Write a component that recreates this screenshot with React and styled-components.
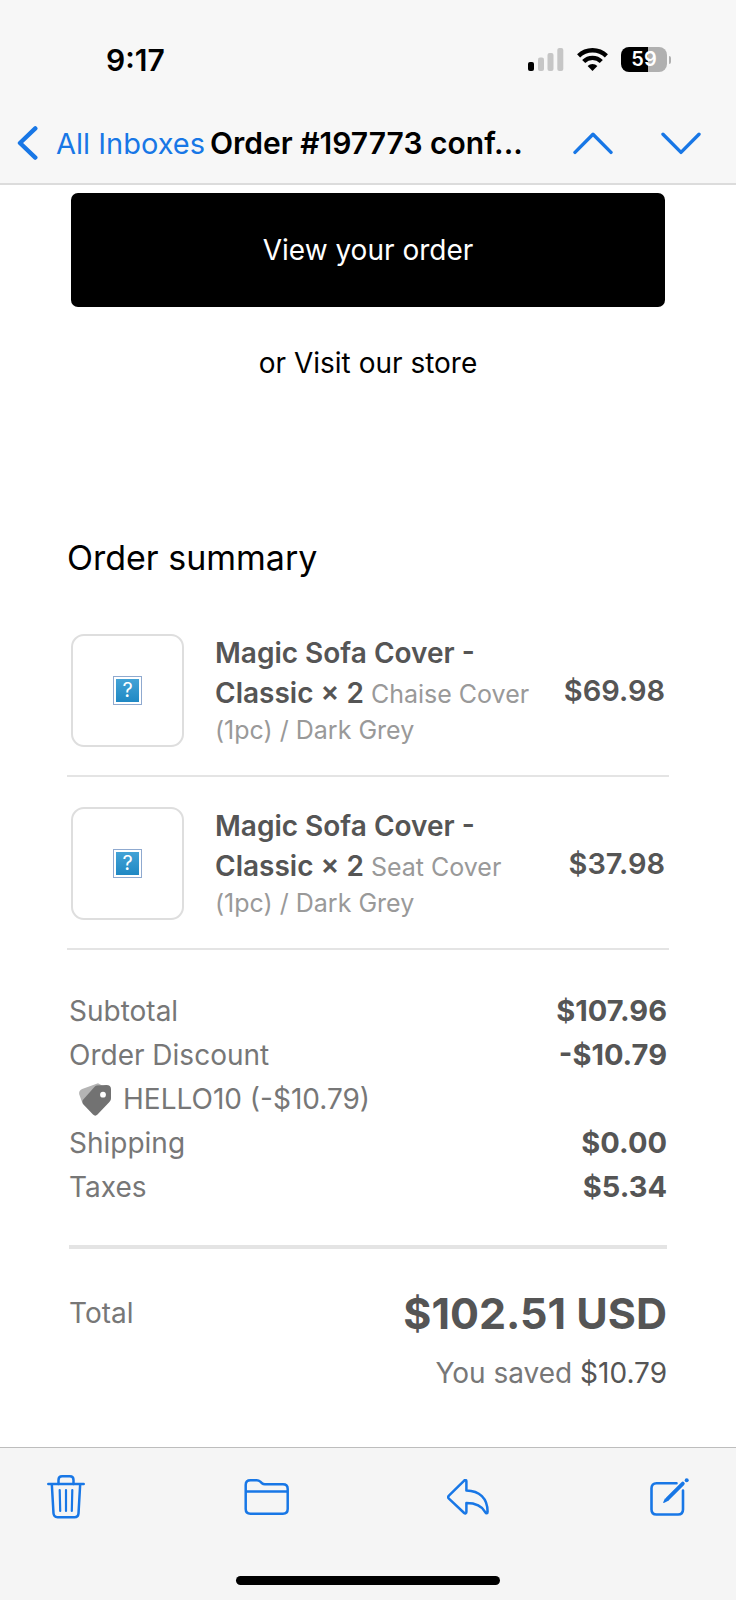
import React from 'react';
import styled, { createGlobalStyle } from 'styled-components';

const items = [
  { id: 1, name: 'Magic Sofa Cover - Classic × 2', variant: 'Chaise Cover (1pc) / Dark Grey', price: '$69.98' },
  { id: 2, name: 'Magic Sofa Cover - Classic × 2', variant: 'Seat Cover (1pc) / Dark Grey', price: '$37.98' },
];

const App = () => (
  <>
    <GlobalStyle />
    <Screen>
      <StatusBar>
        <Time>9:17</Time>
        <StatusIcons>
          <SignalIcon />
          <WifiIcon />
          <Battery>
            <BatteryLevel>59</BatteryLevel>
            <BatteryTip />
          </Battery>
        </StatusIcons>
      </StatusBar>

      <NavBar>
        <BackButton type="button">
          <svg width="21" height="34" viewBox="0 0 21 34" fill="none" stroke="currentColor" strokeWidth="4.4" strokeLinecap="round" strokeLinejoin="round">
            <path d="M18.3 2.4 3 17l15.3 14.6" />
          </svg>
          All Inboxes
        </BackButton>
        <NavTitle>Order #197773 conf...</NavTitle>
        <NavArrows>
          <IconButton type="button" aria-label="Previous message">
            <ArrowSvg><path d="M2 20.4 20 2.2l18 18.2" /></ArrowSvg>
          </IconButton>
          <IconButton type="button" aria-label="Next message">
            <ArrowSvg><path d="M2 2.2 20 20.4 38 2.2" /></ArrowSvg>
          </IconButton>
        </NavArrows>
      </NavBar>

      <Mail>
        <OrderButton type="button">View your order</OrderButton>
        <StoreLine>
          or <StoreLink href="#store">Visit our store</StoreLink>
        </StoreLine>

        <SectionTitle>Order summary</SectionTitle>
        <ItemList>
          {items.map(item => (
            <Item key={item.id}>
              <Thumb>
                <MissingImage>?</MissingImage>
              </Thumb>
              <Description>
                <ItemName>{item.name}</ItemName> {item.variant}
              </Description>
              <ItemPrice>{item.price}</ItemPrice>
            </Item>
          ))}
        </ItemList>

        <Totals>
          <tbody>
            <tr>
              <Label>Subtotal</Label>
              <Amount>$107.96</Amount>
            </tr>
            <tr>
              <Label>Order Discount</Label>
              <Amount>-$10.79</Amount>
            </tr>
            <tr>
              <Label colSpan={2}>
                <Coupon>
                  <TagIcon />
                  HELLO10 (-$10.79)
                </Coupon>
              </Label>
            </tr>
            <tr>
              <Label>Shipping</Label>
              <Amount>$0.00</Amount>
            </tr>
            <tr>
              <Label>Taxes</Label>
              <Amount>$5.34</Amount>
            </tr>
          </tbody>
        </Totals>

        <GrandTotal>
          <span>Total</span>
          <GrandAmount>$102.51 USD</GrandAmount>
        </GrandTotal>
        <Saved>
          You saved <SavedAmount>$10.79</SavedAmount>
        </Saved>
      </Mail>

      <BottomBar>
        <Toolbar>
          <IconButton type="button" aria-label="Delete"><TrashIcon /></IconButton>
          <IconButton type="button" aria-label="Move to folder"><FolderIcon /></IconButton>
          <IconButton type="button" aria-label="Reply"><ReplyIcon /></IconButton>
          <IconButton type="button" aria-label="Compose"><ComposeIcon /></IconButton>
        </Toolbar>
        <HomeIndicator />
      </BottomBar>
    </Screen>
  </>
);

// Icons
const SignalIcon = () => (
  <svg width="36" height="23" viewBox="0 0 36 23">
    <rect x="0" y="14" width="6" height="9" rx="2" fill="#000" />
    <rect x="10" y="9.5" width="6" height="13.5" rx="2" fill="#c6c6c6" />
    <rect x="19.5" y="5" width="6" height="18" rx="2" fill="#c6c6c6" />
    <rect x="29.3" y="0" width="6" height="23" rx="2" fill="#c6c6c6" />
  </svg>
);

const WifiIcon = () => (
  <svg width="31" height="23" viewBox="0 0 31 23" fill="none" stroke="#000" strokeWidth="4.4">
    <path d="M1.6 7.9a20 20 0 0 1 27.8 0" />
    <path d="M6.7 13.5a12.500 12.500 0 0 1 17.600 0" />
    <path d="M10.6 18a7 7 0 0 1 9.800 0L15.500 22.900z" fill="#000" stroke="none" />
  </svg>
);

const TagIcon = () => (
  <svg width="32" height="33" viewBox="0 0 32 33">
    <path d="M19 .3 3.200 6C.8 6.900-.4 9 .3 11.500L3 19 24 3z" fill="#b4b4b4" />
    <path d="M17.800 2.500 27.500 1.900c2.800 0 4.500 1.400 4.500 4.200v9c0 1.600-.5 2.800-1.600 3.900L18.500 31.600c-1.400 1.400-3.100 1.400-4.500 0L4.200 21.200c-1.300-1.500-1.300-3.200.1-4.600L15.400 4c.7-.8 1.400-1.300 2.400-1.500z" fill="#727272" />
    <circle cx="24" cy="11.700" r="2.900" fill="#fff" />
  </svg>
);

const TrashIcon = () => (
  <svg width="38" height="44" viewBox="0 0 38 44" fill="none" stroke="currentColor" strokeWidth="2.500" strokeLinecap="round" strokeLinejoin="round">
    <path d="M1.300 9h35.400M4.800 9l1.700 29.300c.2 2.600 1.500 3.900 4 3.900h17c2.500 0 3.800-1.300 4-3.900L33.200 9" />
    <path d="M11.500 9V4.900c0-2.300 1.300-3.600 3.600-3.600h7.800c2.300 0 3.600 1.300 3.600 3.600V9" />
    <path d="M12.700 15l.5 21M19 15v21M25.300 15l-.5 21" strokeWidth="2.200" />
  </svg>
);

const FolderIcon = () => (
  <svg width="45" height="36" viewBox="0 0 45 36" fill="none" stroke="currentColor" strokeWidth="2.500" strokeLinejoin="round">
    <path d="M1.700 30V6c0-3.200 1.600-4.700 4.800-4.700h6.200c1.500 0 2.500.4 3.600 1.400l1.700 1.500c.9.8 1.700 1.100 2.900 1.100h18c3.200 0 4.800 1.500 4.800 4.700v20c0 3.200-1.600 4.700-4.800 4.700H6.500c-3.200 0-4.800-1.500-4.800-4.700zM1.700 12.600h42" />
  </svg>
);

const ReplyIcon = () => (
  <svg width="42" height="36" viewBox="0 0 42 36" fill="none" stroke="currentColor" strokeWidth="2.500" strokeLinejoin="round">
    <path d="M19.400 2.300v9.200c13 .2 21.200 7.600 21.200 21.200 0 1.900-1.400 2.100-2.200.6-3.700-6.800-9.300-9.200-19-9.200v9c0 1.400-1.200 1.800-2.200.9L1.900 19.600c-1-.9-1-2 0-2.900L17.200 1.600c1-1 2.200-.7 2.200.7z" />
  </svg>
);

const ComposeIcon = () => (
  <svg width="41" height="38" viewBox="-2 0 41 38" fill="none" stroke="currentColor" strokeWidth="2.600" strokeLinecap="round">
    <path d="M26.500 5.300H6.500C3.200 5.300 1.500 7 1.500 10.300v21.200c0 3.300 1.700 5 5 5H28c3.300 0 5-1.700 5-5V12.500" />
    <path d="M17.500 20.800 32.800 5.600" strokeWidth="3.800" />
    <path d="M15 20.300 18.800 22.400 13.900 24.900c-.5.200-.9-.2-.7-.7z" fill="currentColor" stroke="none" />
    <circle cx="36.700" cy="2.200" r="2" fill="currentColor" stroke="none" />
  </svg>
);

// Styled Components
const GlobalStyle = createGlobalStyle`
  * {
    box-sizing: border-box;
  }
  body {
    margin: 0;
    background: #fff;
    font-family: Inter, 'Liberation Sans', sans-serif;
    font-size: 28px;
    color: #000;
  }
  button {
    font-family: inherit;
    border: none;
    cursor: pointer;
  }
  svg {
    display: block;
    flex-shrink: 0;
  }
`;

const Screen = styled.div`
  display: flex;
  flex-direction: column;
  min-height: 100vh;
`;

const StatusBar = styled.div`
  display: flex;
  justify-content: space-between;
  align-items: center;
  height: 103px;
  padding: 16px 65px 0 106px;
  background: #f7f7f7;
`;

const Time = styled.span`
  font-size: 30px;
  font-weight: 600;
`;

const StatusIcons = styled.div`
  display: flex;
  align-items: center;
  gap: 13px;
`;

const Battery = styled.div`
  display: flex;
  align-items: center;
  gap: 2px;
`;

const BatteryLevel = styled.span`
  width: 46px;
  border-radius: 8px;
  background: linear-gradient(to right, #000 59%, #b0b0b0 59%);
  color: #fff;
  font-size: 20px;
  font-weight: 600;
  line-height: 25px;
  text-align: center;
`;

const BatteryTip = styled.span`
  width: 2px;
  height: 8px;
  border-radius: 0 2px 2px 0;
  background: #b0b0b0;
`;

const NavBar = styled.nav`
  display: flex;
  align-items: center;
  height: 82px;
  padding: 0 35px 0 17px;
  background: #f7f7f7;
  border-bottom: 2px solid #dcdcdc;
`;

const BackButton = styled.button`
  display: flex;
  align-items: center;
  gap: 18px;
  padding: 0;
  background: none;
  color: #1877e6;
  font-size: 29px;
  white-space: nowrap;
`;

const NavTitle = styled.h1`
  margin: 0 0 0 5px;
  font-size: 30px;
  font-weight: 600;
  white-space: nowrap;
`;

const NavArrows = styled.div`
  display: flex;
  gap: 48px;
  margin-left: auto;
`;

const IconButton = styled.button`
  padding: 0;
  background: none;
  color: #1877e6;
`;

const ArrowSvg = styled.svg.attrs({
  viewBox: '0 0 40 23',
  fill: 'none',
  stroke: 'currentColor',
  strokeWidth: 3.4,
  strokeLinecap: 'round',
  strokeLinejoin: 'round',
})`
  width: 40px;
  height: 23px;
`;

const Mail = styled.main`
  flex: 1;
  display: flex;
  flex-direction: column;
  padding: 8px 67px 48px;
`;

const OrderButton = styled.button`
  height: 114px;
  margin: 0 4px;
  border-radius: 7px;
  background: #000;
  color: #fff;
  font-size: 28px;
`;

const StoreLine = styled.p`
  margin: 36px 0 0;
  line-height: 40px;
  text-align: center;
`;

const StoreLink = styled.a`
  color: inherit;
  text-decoration: none;
`;

const SectionTitle = styled.h2`
  margin: 151px 0 0;
  font-size: 34px;
  font-weight: 400;
  line-height: 48px;
`;

const ItemList = styled.ul`
  margin: 22px 0 0;
  padding: 0;
  list-style: none;
`;

const Item = styled.li`
  display: flex;
  align-items: center;
  padding: 29px 4px 27px;
  border-bottom: 2px solid #e4e4e4;
`;

const Thumb = styled.div`
  display: flex;
  align-items: center;
  justify-content: center;
  width: 113px;
  height: 113px;
  border: 2px solid #dedede;
  border-radius: 13px;
`;

const MissingImage = styled.span`
  width: 29px;
  height: 29px;
  border: 1px solid #8fa9cf;
  outline: 2px solid #fff;
  outline-offset: -3px;
  background: linear-gradient(#46a5d8, #1c86c2);
  color: #fff;
  font-size: 20px;
  line-height: 27px;
  text-align: center;
`;

const Description = styled.p`
  flex: 1;
  margin: 0 0 0 31px;
  color: #999;
  font-size: 25px;
  line-height: 35px;
`;

const ItemName = styled.strong`
  color: #555;
  font-size: 28px;
  font-weight: 600;
  line-height: 40px;
`;

const ItemPrice = styled.span`
  min-width: 116px;
  color: #555;
  font-size: 29px;
  font-weight: 600;
  text-align: right;
`;

const Totals = styled.table`
  width: calc(100% - 4px);
  margin: 39px 2px 0;
  border-collapse: collapse;
  line-height: 44px;
`;

const Label = styled.th`
  padding: 0;
  color: #777;
  font-weight: 400;
  text-align: left;
`;

const Amount = styled.td`
  padding: 0;
  color: #555;
  font-size: 29px;
  font-weight: 700;
  text-align: right;
`;

const Coupon = styled.span`
  display: flex;
  align-items: center;
  gap: 12px;
  padding-left: 10px;
`;

const GrandTotal = styled.div`
  display: flex;
  align-items: center;
  justify-content: space-between;
  margin: 36px 2px 0;
  padding-top: 38px;
  border-top: 4px solid #e4e4e4;
  color: #777;
`;

const GrandAmount = styled.strong`
  color: #555;
  font-size: 43px;
  font-weight: 700;
  line-height: 52px;
`;

const Saved = styled.p`
  margin: 14px 2px 0;
  color: #777;
  line-height: 40px;
  text-align: right;
`;

const SavedAmount = styled.span`
  color: #555;
`;

const BottomBar = styled.footer`
  display: flex;
  flex-direction: column;
  align-items: center;
  background: #f5f5f5;
  border-top: 1px solid #bdbdbd;
`;

const Toolbar = styled.div`
  display: flex;
  align-items: center;
  justify-content: space-between;
  width: 100%;
  height: 97px;
  padding: 0 47px;
`;

const HomeIndicator = styled.div`
  width: 264px;
  height: 9px;
  margin: 31px 0 15px;
  border-radius: 5px;
  background: #000;
`;

export default App;
